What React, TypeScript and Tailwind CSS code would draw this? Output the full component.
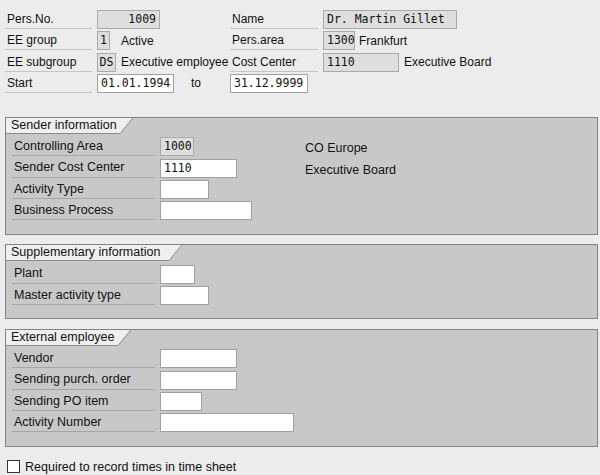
import React from "react";
import clsx from "clsx";

const sans = "font-['Liberation_Sans',Arial,sans-serif]";
const mono = "font-['DejaVu_Sans_Mono',monospace]";

function Label({ className, children }: { className?: string; children: React.ReactNode }) {
  return (
    <div
      className={clsx(
        "flex h-[19px] shrink-0 items-center whitespace-nowrap border-b pl-[2px] text-[#111]",
        className
      )}
    >
      {children}
    </div>
  );
}

function Field({
  className,
  gray,
  children,
}: {
  className?: string;
  gray?: boolean;
  children?: React.ReactNode;
}) {
  return (
    <div
      className={clsx(
        mono,
        "flex h-[19px] shrink-0 items-center whitespace-nowrap border px-[3px] text-[11.5px] text-[#111]",
        gray ? "border-[#a9a9a9] bg-[#dedede]" : "border-[#a0a0a0] bg-white",
        className
      )}
    >
      {children}
    </div>
  );
}

function Text({ className, children }: { className?: string; children: React.ReactNode }) {
  return <span className={clsx("whitespace-nowrap text-[#111]", className)}>{children}</span>;
}

function GroupBox({ title, tabW, children }: { title: string; tabW: string; children: React.ReactNode }) {
  return (
    <div className="ml-[5px] w-[593px] border border-[#828282] bg-[#c8c8c8]">
      <div className="flex h-[16px]">
        <div
          className={clsx(
            "flex h-[16px] items-center whitespace-nowrap border-b border-[#8a8a8a] bg-[#efefef] pl-[5px] text-[12.5px] text-[#111]",
            tabW
          )}
        >
          {title}
        </div>
        <svg width="13" height="16" viewBox="0 0 13 16" className="block">
          <polygon points="0,0 13,0 0,15.5" fill="#efefef" />
          <line x1="12.8" y1="0" x2="0" y2="15.5" stroke="#8a8a8a" strokeWidth="1" />
        </svg>
      </div>
      <div className="pb-[11px] pl-[6px] pt-[3px]">{children}</div>
    </div>
  );
}

function BoxRow({ label, children }: { label: string; children?: React.ReactNode }) {
  return (
    <div className="flex h-[21.33px] items-start">
      <Label className="w-[143px] border-[#a6a6a6] text-[12.5px]">{label}</Label>
      <div className="ml-[5px] flex items-start">{children}</div>
    </div>
  );
}

export default function App() {
  return (
    <div className={clsx(sans, "h-[475px] w-[600px] overflow-hidden bg-[#ececec] text-[12px]")}>
      {/* Header data */}
      <div className="pl-[5px] pt-[10px]">
        <div className="flex h-[21.33px] items-start">
          <Label className="w-[87px] border-[#c4c4c4]">Pers.No.</Label>
          <div className="ml-[5px] flex w-[133px] shrink-0">
            <Field gray className="w-[63px] justify-end">1009</Field>
          </div>
          <Label className="w-[88px] border-[#c4c4c4]">Name</Label>
          <Field gray className="ml-[5px] w-[134px]">Dr. Martin Gillet</Field>
        </div>
        <div className="flex h-[21.33px] items-start">
          <Label className="w-[87px] border-[#c4c4c4]">EE group</Label>
          <div className="ml-[5px] flex w-[133px] shrink-0 items-center">
            <Field gray className="w-[13px] justify-center px-0">1</Field>
            <Text className="ml-[11px]">Active</Text>
          </div>
          <Label className="w-[88px] border-[#c4c4c4]">Pers.area</Label>
          <div className="ml-[5px] flex items-center">
            <Field gray className="w-[32px] px-[2px]">1300</Field>
            <Text className="ml-[4px]">Frankfurt</Text>
          </div>
        </div>
        <div className="flex h-[21.33px] items-start">
          <Label className="w-[87px] border-[#c4c4c4]">EE subgroup</Label>
          <div className="ml-[5px] flex w-[133px] shrink-0 items-center">
            <Field gray className="w-[19px] justify-center px-0">DS</Field>
            <Text className="ml-[5px]">Executive employee</Text>
          </div>
          <Label className="w-[88px] border-[#c4c4c4]">Cost Center</Label>
          <div className="ml-[5px] flex items-center">
            <Field gray className="w-[76px] px-[2px]">1110</Field>
            <Text className="ml-[5px]">Executive Board</Text>
          </div>
        </div>
        <div className="flex h-[21.33px] items-start">
          <Label className="w-[87px] border-[#c4c4c4]">Start</Label>
          <div className="ml-[5px] flex w-[133px] shrink-0 items-center">
            <Field className="w-[77px]">01.01.1994</Field>
            <Text className="ml-[17px]">to</Text>
          </div>
          <Field className="w-[78px]">31.12.9999</Field>
        </div>
      </div>

      {/* Sender information */}
      <div className="mt-[22px]">
        <GroupBox title="Sender information" tabW="w-[114px]">
          <BoxRow label="Controlling Area">
            <div className="flex w-[145px]">
              <Field gray className="w-[34px] px-[2px]">1000</Field>
            </div>
            <Text className="mt-[2px] text-[12.5px]">CO Europe</Text>
          </BoxRow>
          <BoxRow label="Sender Cost Center">
            <div className="flex w-[145px]">
              <Field className="w-[77px] px-[2px]">1110</Field>
            </div>
            <Text className="mt-[2px] text-[12.5px]">Executive Board</Text>
          </BoxRow>
          <BoxRow label="Activity Type">
            <Field className="w-[49px]" />
          </BoxRow>
          <BoxRow label="Business Process">
            <Field className="w-[92px]" />
          </BoxRow>
        </GroupBox>
      </div>

      {/* Supplementary information */}
      <div className="mt-[9px]">
        <GroupBox title="Supplementary information" tabW="w-[163px]">
          <div className="pt-[1px]">
            <BoxRow label="Plant">
              <Field className="w-[35px]" />
            </BoxRow>
            <BoxRow label="Master activity type">
              <Field className="w-[49px]" />
            </BoxRow>
          </div>
        </GroupBox>
      </div>

      {/* External employee */}
      <div className="mt-[10px]">
        <GroupBox title="External employee" tabW="w-[112px]">
          <BoxRow label="Vendor">
            <Field className="w-[77px]" />
          </BoxRow>
          <BoxRow label="Sending purch. order">
            <Field className="w-[77px]" />
          </BoxRow>
          <BoxRow label="Sending PO item">
            <Field className="w-[42px]" />
          </BoxRow>
          <BoxRow label="Activity Number">
            <Field className="w-[134px]" />
          </BoxRow>
        </GroupBox>
      </div>

      <div className="ml-[7px] mt-[11px] flex items-center">
        <div className="h-[13px] w-[13px] border border-[#333] bg-white" />
        <Text className="ml-[5px] text-[12.5px]">Required to record times in time sheet</Text>
      </div>
    </div>
  );
}
